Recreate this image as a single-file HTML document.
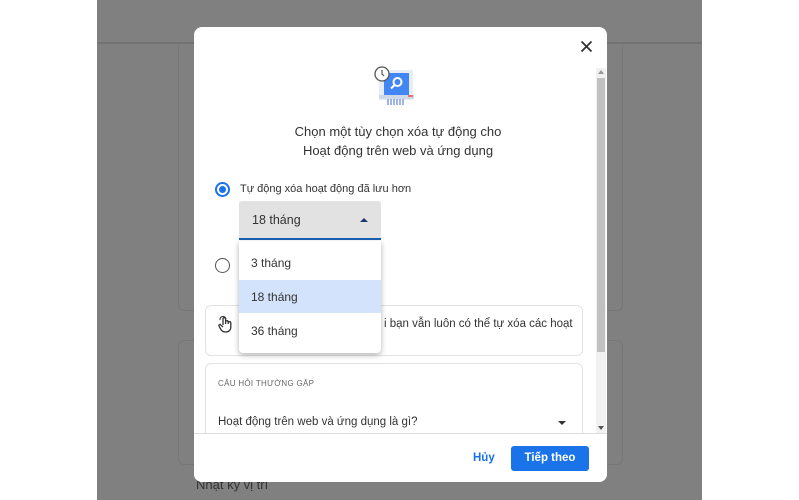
<!DOCTYPE html>
<html><head><meta charset="utf-8"><style>
*{margin:0;padding:0;box-sizing:border-box}
body{width:799px;height:500px;overflow:hidden;background:#fff;font-family:"Liberation Sans",Arial,sans-serif;position:relative}
.a{position:absolute}
.t{position:absolute;white-space:nowrap}
</style></head><body>
<div class="a" style="left:97px;top:0;width:605px;height:500px;background:#808080"></div>
<div class="a" style="left:97px;top:42px;width:605px;height:2px;background:#727272"></div>
<div class="a" style="left:178px;top:45px;width:445px;height:266px;border:1px solid #777;border-top:none;border-radius:0 0 6px 6px"></div>
<div class="a" style="left:178px;top:340px;width:445px;height:125px;border:1px solid #777;border-radius:6px"></div>
<div class="t" style="left:196px;top:477px;font-size:13px;color:#333">Nhật ký vị trí</div>

<div class="a" style="left:194px;top:27px;width:413px;height:455px;background:#fff;border-radius:8px;overflow:hidden">
  <svg class="a" style="left:386px;top:13px" width="13" height="13" viewBox="0 0 13 13"><path d="M1.5 1.5L11.5 11.5M11.5 1.5L1.5 11.5" stroke="#333" stroke-width="1.8"/></svg>
  <div class="a" style="left:402px;top:41px;width:10px;height:365px;background:#f1f1f1"></div>
  <div class="a" style="left:403px;top:51px;width:8px;height:274px;background:#c1c1c1"></div>
  <svg class="a" style="left:404px;top:43px" width="6" height="4"><path d="M0 4L3 0L6 4Z" fill="#999"/></svg>
  <svg class="a" style="left:404px;top:399px" width="6" height="4"><path d="M0 0L3 4L6 0Z" fill="#555"/></svg>
  <svg class="a" style="left:180px;top:39px" width="45" height="42" viewBox="0 0 45 42">
    <rect x="5" y="4" width="34" height="30" rx="1" fill="#e8edf5"/>
    <rect x="10" y="7" width="25" height="22" fill="#4285f4"/>
    <circle cx="23.5" cy="16" r="4" fill="none" stroke="#fff" stroke-width="2"/>
    <path d="M20.5 19L17 22.5" stroke="#fff" stroke-width="2"/>
    <rect x="5" y="29" width="35" height="4" fill="#cfd8e6"/>
    <rect x="34" y="29" width="5" height="2" fill="#e57373"/>
    <path d="M14 33v6M17 33v6M20 33v6M23 33v6M26 33v6M29 33v6" stroke="#6d8fd8" stroke-width="1.3"/>
    <circle cx="8" cy="8" r="7" fill="#fff" stroke="#555" stroke-width="1.3"/>
    <path d="M8 4v4l2 2" stroke="#555" stroke-width="1.2" fill="none"/>
  </svg>
  <div class="t" style="left:0;width:408px;top:95px;text-align:center;font-size:13px;line-height:19px;color:#333">Chọn một tùy chọn xóa tự động cho<br>Hoạt động trên web và ứng dụng</div>
  <div class="a" style="left:21px;top:155px;width:15px;height:15px;border:2px solid #1a73e8;border-radius:50%"></div>
  <div class="a" style="left:25px;top:159px;width:7px;height:7px;background:#1a73e8;border-radius:50%"></div>
  <div class="t" style="left:46px;top:156px;font-size:11px;color:#333">Tự động xóa hoạt động đã lưu hơn</div>
  <div class="a" style="left:45px;top:174px;width:142px;height:39px;background:#e2e2e2;border-bottom:2px solid #1a5fb4;border-radius:3px 3px 0 0"></div>
  <div class="t" style="left:58px;top:186px;font-size:12.5px;color:#333">18 tháng</div>
  <svg class="a" style="left:166px;top:190px" width="8" height="5"><path d="M0 5L4 1L8 5Z" fill="#1a3a6e"/></svg>
  <div class="a" style="left:21px;top:231px;width:15px;height:15px;border:1.5px solid #555;border-radius:50%"></div>
  <div class="a" style="left:11px;top:278px;width:378px;height:51px;border:1px solid #e3e3e3;border-radius:6px"></div>
  <svg class="a" style="left:24px;top:289px" width="16" height="17" viewBox="0 0 16 17"><path d="M5 9V3a1.3 1.3 0 0 1 2.6 0v5M7.6 6a1.3 1.3 0 0 1 2.6 0v2M10.2 7a1.3 1.3 0 0 1 2.6 0v4c0 3-2 5-5 5s-4-1-5.5-3.5L1 10c-.5-1 .8-2 1.6-1.2L5 11" fill="none" stroke="#333" stroke-width="1.3"/><path d="M2 4a3 3 0 0 1 6 -1" fill="none" stroke="#333" stroke-width="1.1"/></svg>
  <div class="t" style="left:190px;top:291px;font-size:11.5px;color:#333">i bạn vẫn luôn có thể tự xóa các hoạt</div>
  <div class="a" style="left:11px;top:336px;width:378px;height:120px;border:1px solid #e3e3e3;border-radius:6px"></div>
  <div class="t" style="left:24px;top:352px;font-size:8px;letter-spacing:.3px;color:#666">CÂU HỎI THƯỜNG GẶP</div>
  <div class="t" style="left:24px;top:389px;font-size:11.5px;color:#333">Hoạt động trên web và ứng dụng là gì?</div>
  <svg class="a" style="left:364px;top:394px" width="8" height="5"><path d="M0 0L4 4L8 0Z" fill="#333"/></svg>
  <div class="a" style="left:45px;top:214px;width:142px;height:112px;background:#fff;border-radius:0 0 4px 4px;box-shadow:0 2px 6px rgba(0,0,0,.3)"></div>
  <div class="a" style="left:45px;top:253px;width:142px;height:33px;background:#d3e3fb"></div>
  <div class="t" style="left:57px;top:229px;font-size:12px;color:#333">3 tháng</div>
  <div class="t" style="left:57px;top:263px;font-size:12px;color:#333">18 tháng</div>
  <div class="t" style="left:57px;top:297px;font-size:12px;color:#333">36 tháng</div>
  <div class="a" style="left:0;top:406px;width:413px;height:49px;background:#fff;border-top:1px solid #ddd"></div>
  <div class="t" style="left:279px;top:425px;font-size:11.5px;font-weight:bold;color:#1a73e8">Hủy</div>
  <div class="a" style="left:317px;top:419px;width:78px;height:25px;background:#1a73e8;border-radius:3px;color:#fff;font-size:11.5px;font-weight:bold;text-align:center;line-height:25px">Tiếp theo</div>
</div>
</body></html>
